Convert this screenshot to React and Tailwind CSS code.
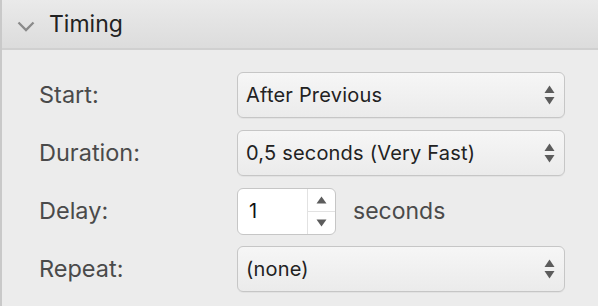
import React from "react";

function Arrows() {
  return (
    <svg width="11" height="22" viewBox="0 0 11 22" className="shrink-0">
      <path d="M5.5 1.5 L10.5 9 L0.5 9 Z" fill="#5c5c5c" />
      <path d="M5.5 20.5 L10.5 13 L0.5 13 Z" fill="#5c5c5c" />
    </svg>
  );
}

function Select({ value }) {
  return (
    <div className="flex items-center justify-between h-[46px] w-[328px] rounded-[6px] border border-[#c6c6c6] bg-gradient-to-b from-[#f6f6f6] to-[#ebebeb] pl-[8px] pr-[9px] shadow-[0_1px_0_rgba(0,0,0,0.04)]">
      <span className="text-[20px] tracking-[0.01em] text-[#222]">{value}</span>
      <Arrows />
    </div>
  );
}

function Stepper({ value }) {
  return (
    <div className="flex h-[47px] w-[99px] rounded-[6px] border border-[#c6c6c6] bg-white overflow-hidden">
      <div className="flex-1 flex items-center pl-[11px] text-[20px] text-[#111]">
        {value}
      </div>
      <div className="w-[28px] flex flex-col border-l border-[#e2e2e2]">
        <div className="flex-1 flex items-center justify-center border-b border-[#e2e2e2]">
          <svg width="11" height="8" viewBox="0 0 11 8">
            <path d="M5.5 0.5 L10.5 7.5 L0.5 7.5 Z" fill="#5c5c5c" />
          </svg>
        </div>
        <div className="flex-1 flex items-center justify-center">
          <svg width="11" height="8" viewBox="0 0 11 8">
            <path d="M5.5 7.5 L10.5 0.5 L0.5 0.5 Z" fill="#5c5c5c" />
          </svg>
        </div>
      </div>
    </div>
  );
}

export default function App() {
  const rows = [
    { label: "Start:", control: <Select value="After Previous" /> },
    { label: "Duration:", control: <Select value="0,5 seconds (Very Fast)" /> },
    {
      label: "Delay:",
      control: (
        <div className="flex items-center gap-[17px]">
          <Stepper value="1" />
          <span className="text-[23px] text-[#4a4a4a]">seconds</span>
        </div>
      ),
    },
    { label: "Repeat:", control: <Select value="(none)" /> },
  ];

  return (
    <div
      className="w-[598px] h-[306px] bg-[#ececec] border-l-2 border-[#c9c9c9] overflow-hidden"
      style={{ fontFamily: "Inter, 'Noto Sans', sans-serif" }}
    >
      {/* Header */}
      <div className="h-[50px] flex items-center bg-gradient-to-b from-[#eaeaea] to-[#dcdcdc] border-b-2 border-[#d0d0d0]">
        <svg width="18" height="11" viewBox="0 0 18 11" className="ml-[15px] mt-[5px]">
          <path d="M1.5 1.5 L9 9 L16.5 1.5" fill="none" stroke="#8a8a8a" strokeWidth="2.3" />
        </svg>
        <span className="ml-[14px] text-[23px] text-[#222]">Timing</span>
      </div>

      {/* Body */}
      <div className="flex flex-col gap-[12px] pt-[22px] pl-[37px]">
        {rows.map((row) => (
          <div key={row.label} className="flex items-center h-[46px]">
            <span className="w-[198px] text-[23.5px] text-[#4a4a4a]">{row.label}</span>
            {row.control}
          </div>
        ))}
      </div>
    </div>
  );
}
